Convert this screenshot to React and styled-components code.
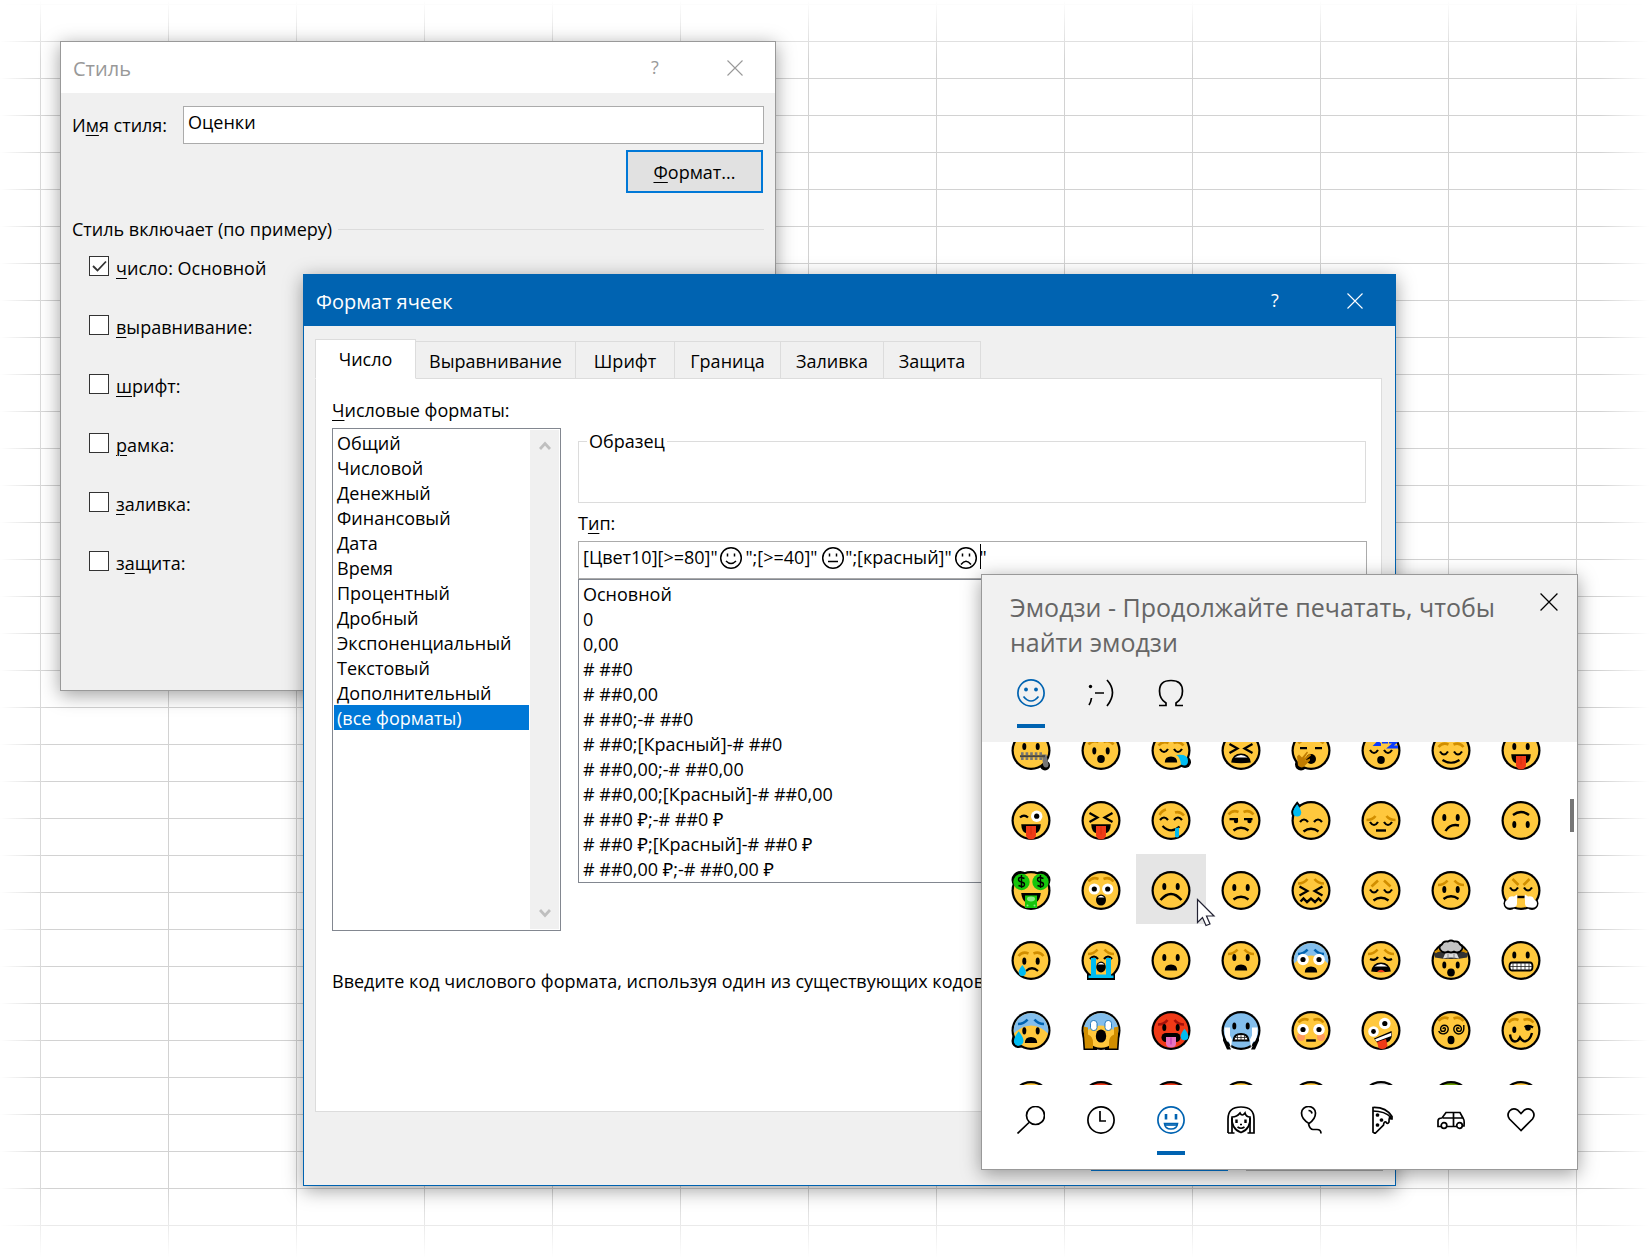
import React, { useState } from 'react';
import styled, { createGlobalStyle, css } from 'styled-components';

const GlobalStyle = createGlobalStyle`
  * {
    box-sizing: border-box;
  }
  body {
    margin: 0;
    background: #fff;
    color: #000;
    font-family: 'Open Sans', 'Noto Sans', 'DejaVu Sans', sans-serif;
    font-size: 18px;
    line-height: 25px;
  }
  button,
  input {
    font: inherit;
    color: inherit;
  }
  u {
    text-underline-offset: 3px;
    text-decoration-thickness: 1px;
  }
`;

const YELLOW = '#ffc83d';
const ORANGE = '#d18e00';
const RED = '#f03a17';
const BLUE = '#00bcf2';
const ICE = '#83beec';
const NAVY = '#0063b1';

/* ---------- desktop and windows ---------- */

const Desktop = styled.main`
  position: relative;
  min-height: 100vh;
  overflow: hidden;
`;

const Cells = styled.div`
  position: absolute;
  inset: 0;
  background-image: linear-gradient(#d2d2d2 1px, transparent 1px),
    linear-gradient(90deg, #d2d2d2 1px, transparent 1px);
  background-size: 128px 37px;
  background-position: 40px 4px;
  mask-image: linear-gradient(transparent, #000 60px, #000 calc(100% - 70px), transparent),
    linear-gradient(90deg, transparent, #000 48px, #000 calc(100% - 50px), transparent);
  mask-composite: intersect;
`;

const Window = styled.section`
  position: absolute;
  left: ${({ $left }) => $left}px;
  top: ${({ $top }) => $top}px;
  width: ${({ $width }) => $width}px;
  border: 1px solid ${({ $border }) => $border || '#999'};
  background: #f0f0f0;
  box-shadow: 0 4px 18px rgba(0, 0, 0, 0.38);
`;

const TitleBar = styled.header`
  display: flex;
  align-items: center;
  height: 51px;
  padding-left: 12px;
  background: ${({ $active }) => ($active ? NAVY : '#fff')};
  color: ${({ $active }) => ($active ? '#fff' : '#999')};
`;

const Title = styled.h1`
  flex: 1;
  margin: 0;
  padding-top: 2px;
  font-size: 20px;
  font-weight: 400;
`;

const TitleButton = styled.button`
  display: grid;
  place-items: center;
  width: 80px;
  height: 51px;
  padding: 0;
  border: 0;
  background: none;
`;

const PushButton = styled.button`
  width: 137px;
  height: 43px;
  padding: 2px 0 0;
  border: ${({ $primary }) => ($primary ? '2px solid #0078d7' : '1px solid #adadad')};
  background: #e1e1e1;
`;

const TextInput = styled.input`
  flex: 1;
  width: 100%;
  min-width: 0;
  height: 38px;
  padding: 0 4px 6px;
  border: 1px solid #ababab;
  border-radius: 0;
  background: #fff;
  outline: none;
`;

/* ---------- style window ---------- */

const StyleBody = styled.div`
  display: flex;
  flex-direction: column;
  padding: 13px 11px 114px;
`;

const NameRow = styled.div`
  display: flex;
  align-items: center;
  gap: 16px;
`;

const ButtonRow = styled.div`
  display: flex;
  justify-content: flex-end;
  gap: 18px;
  padding: ${({ $pad }) => $pad};
`;

const GroupTitle = styled.div`
  display: flex;
  align-items: center;
  gap: 6px;
  margin-bottom: 14px;
  &::after {
    content: '';
    flex: 1;
    height: 1px;
    background: #dcdcdc;
  }
`;

const CheckList = styled.div`
  display: grid;
  gap: 34px;
  padding-left: 17px;
`;

const CheckLabel = styled.label`
  display: flex;
  align-items: flex-start;
  gap: 7px;
`;

const CheckBox = styled.span`
  display: grid;
  width: 20px;
  height: 20px;
  > * {
    grid-area: 1 / 1;
  }
  input {
    appearance: none;
    width: 20px;
    height: 20px;
    margin: 0;
    border: 1px solid #333;
    background: #fff;
  }
  svg {
    pointer-events: none;
  }
  input:not(:checked) + svg {
    visibility: hidden;
  }
`;

/* ---------- format window ---------- */

const FormatBody = styled.div`
  padding: 13px 12px 14px 11px;
`;

const TabRow = styled.div`
  display: flex;
  align-items: flex-end;
  height: 39px;
`;

const Tab = styled.button`
  width: ${({ $width }) => $width}px;
  height: 38px;
  margin-bottom: -1px;
  padding: 2px 0 0;
  border: 1px solid #dcdcdc;
  border-left-width: 0;
  background: #f0f0f0;
  ${({ $active }) =>
    $active &&
    css`
      height: 40px;
      padding: 0;
      border-left-width: 1px;
      border-bottom-color: #fff;
      background: #fff;
    `}
`;

const Panel = styled.div`
  margin-right: 1px;
  padding: 19px 14px 117px 16px;
  border: 1px solid #dcdcdc;
  background: #fff;
`;

const Columns = styled.div`
  display: grid;
  grid-template-columns: 229px 1fr;
  gap: 17px;
`;

const FieldLabel = styled.label`
  display: block;
  padding-bottom: 5px;
`;

const ListFrame = styled.div`
  display: flex;
  height: ${({ $height }) => $height}px;
  border: 1px solid #828790;
  background: #fff;
`;

const ListBox = styled.ul`
  flex: 1;
  margin: 0;
  padding: 1px;
  list-style: none;
`;

const ListItem = styled.li`
  height: 25px;
  padding: 1px 0 0 3px;
  white-space: pre;
  background: ${({ $selected }) => ($selected ? '#0078d7' : 'transparent')};
  color: ${({ $selected }) => ($selected ? '#fff' : '#000')};
`;

const ScrollTrack = styled.div`
  display: flex;
  flex-direction: column;
  justify-content: space-between;
  align-items: center;
  width: 29px;
  margin: 1px 1px 1px 0;
  padding: 11px 0;
  background: #f0f0f0;
`;

const Sample = styled.fieldset`
  height: 74px;
  margin: 31px 1px 8px 0;
  padding: 0 8px;
  border: 1px solid #dcdcdc;
  legend {
    padding: 0 2px;
  }
`;

const TypeBox = styled.div`
  position: relative;
  display: flex;
`;

const Caret = styled.i`
  position: absolute;
  left: 402px;
  top: 3px;
  width: 1px;
  height: 25px;
  background: #000;
`;

// outline faces shown at full size over the small text glyphs of the code
const CodeFace = styled.svg`
  position: absolute;
  left: ${({ $left }) => $left}px;
  top: 5px;
  border-radius: 50%;
  background: #fff;
  pointer-events: none;
`;

const Hint = styled.p`
  margin: 38px 0 0;
`;

/* ---------- emoji panel ---------- */

const EmojiHead = styled.header`
  padding: 15px 14px 14px;
  background: #f1f1f1;
`;

const EmojiTitleRow = styled.div`
  display: flex;
  align-items: flex-start;
  justify-content: space-between;
  padding-left: 14px;
  color: #666;
`;

const EmojiTitle = styled.h2`
  flex: 1;
  margin: 0;
  font-size: 25px;
  line-height: 35px;
  font-weight: 400;
`;

const CloseEmoji = styled.button`
  width: 28px;
  height: 28px;
  padding: 0;
  border: 0;
  background: none;
  color: #000;
`;

const IconRow = styled.nav`
  display: grid;
  grid-template-columns: repeat(8, 70px);
  padding-top: 19px;
`;

const CategoryBar = styled(IconRow)`
  padding: 21px 14px 14px;
  background: #fff;
`;

const IconTab = styled.button`
  display: grid;
  justify-items: center;
  gap: 17px;
  padding: 0;
  border: 0;
  background: none;
  color: ${({ $active }) => ($active ? NAVY : '#000')};
  &::after {
    content: '';
    width: 28px;
    height: 4px;
    background: ${({ $active }) => ($active ? NAVY : 'transparent')};
  }
`;

const EmojiScroll = styled.div`
  display: flex;
  align-items: flex-start;
  justify-content: space-between;
  height: 343px;
  padding: 0 3px 0 14px;
  background: #fff;
  overflow: hidden;
`;

const EmojiGrid = styled.div`
  display: grid;
  grid-template-columns: repeat(8, 70px);
  margin-top: -28px;
`;

const EmojiCell = styled.button`
  height: 70px;
  padding: 0;
  border: 0;
  background: ${({ $hover }) => ($hover ? '#e5e5e5' : 'transparent')};
  svg {
    display: block;
  }
`;

const Thumb = styled.div`
  width: 4px;
  height: 33px;
  margin-top: 57px;
  background: #767676;
`;

const Pointer = styled.svg`
  position: absolute;
  left: 1196px;
  top: 898px;
`;

/* ---------- face parts, centred on 0,0 ---------- */

const Ink = ({ d, w = 2.2, c = '#000' }) => (
  <path d={d} stroke={c} strokeWidth={w} fill="none" />
);

const Disc = ({ fill = YELLOW }) => (
  <>
    <circle r="19.5" fill="#000" />
    <circle r="17.3" fill={fill} />
  </>
);

const Eyes = ({ y = -4 }) => (
  <>
    <ellipse cx="-6.7" cy={y} rx="2" ry="3.6" />
    <ellipse cx="6.7" cy={y} rx="2" ry="3.6" />
  </>
);

const WideEyes = ({ y = -1, x = 7.5, r = 5.8 }) => (
  <>
    <circle cx={-x} cy={y} r={r} fill="#fff" />
    <circle cx={x} cy={y} r={r} fill="#fff" />
    <circle cx={-x} cy={y} r="2.6" />
    <circle cx={x} cy={y} r="2.6" />
  </>
);

// lids curve down when shut, up when smiling
const Lids = ({ y = 0, up }) => (
  <Ink
    d={
      up
        ? `M-11 ${y + 1.5}q4-5 8 0M3 ${y + 1.5}q4-5 8 0`
        : `M-11 ${y - 1.5}q4 6 8 0M3 ${y - 1.5}q4 6 8 0`
    }
  />
);

const Squint = ({ y = -3 }) => (
  <Ink d={`M-11.5 ${y - 4.5}L-3.5 ${y}L-11.5 ${y + 4.5}M11.5 ${y - 4.5}L3.5 ${y}L11.5 ${y + 4.5}`} />
);

const Brows = ({ y = -7, c = ORANGE }) => (
  <Ink w={2.6} c={c} d={`M-12.5 ${y + 1}q4-5 10-2.5M12.5 ${y + 1}q-4-5-10-2.5`} />
);

const WorryBrows = ({ y = -7, c = ORANGE }) => (
  <Ink w={2.6} c={c} d={`M-13 ${y + 2.5}q6 0 9.5-4.5M13 ${y + 2.5}q-6 0-9.5-4.5`} />
);

const Frown = ({ y = 8 }) => <Ink w={2.4} d={`M-7.5 ${y + 2}q7.5-5.5 15 0`} />;
const Gape = ({ y = 10 }) => <path d={`M-6.2 ${y}q0-6 6.2-6t6.2 6z`} />;
const Round = ({ y = 8.5, rx = 3.8, ry = 4 }) => <ellipse cy={y} rx={rx} ry={ry} />;
const Flat = ({ y = 10, w = 5 }) => <Ink w={2.4} d={`M${-w} ${y}H${w}`} />;

const Tongue = () => (
  <>
    <path d="M-9.8 3.8H9.8Q9.5 12 4 13H-4Q-9.5 12-9.8 3.8z" />
    <path d="M-5 5.5H5V15Q4 19 0 19T-5 15z" fill={RED} />
    <path d="M0 6V14" stroke="#ca2b0c" strokeWidth="0.8" />
  </>
);

const Drop = ({ x, y, s = 1, outline }) => (
  <path
    transform={`translate(${x} ${y}) scale(${s})`}
    d="M0-6Q4-1 4 2A4 4 0 0 1-4 2Q-4-1 0-6z"
    fill={BLUE}
    stroke={outline ? '#000' : 'none'}
    strokeWidth={outline ? 4 : 0}
    paintOrder="stroke"
  />
);

const ColdTop = () => <path d="M-17 3A17.3 17.3 0 1 1 17 3Q9-5 0-5T-17 3z" fill={ICE} />;

const Howl = ({ y = 5, h = 9 }) => (
  <>
    <path d={`M-9.8 ${y + h}Q-8.5 ${y} 0 ${y}T9.8 ${y + h}Q0 ${y + h + 1.5}-9.8 ${y + h}z`} />
    <path d={`M-6.5 ${y + 4}Q0 ${y - 1} 6.5 ${y + 4}z`} fill="#fff" />
  </>
);

const Teeth = ({ d, lines }) => (
  <>
    <path d={d} fill="#fff" stroke="#000" strokeWidth="1.8" />
    <path d={lines} fill="none" stroke="#222" strokeWidth="0.8" />
  </>
);

const FACES = [
  // row 1
  <><circle cx="14" cy="15" r="5" /><Disc /><Eyes /><path d="M11 4h4.5l2 10q0 3-2.5 3t-3-3z" fill="#767676" /><path d="M-10 3.2H12M-10 8.2H12" stroke="#767676" strokeWidth="2.8" strokeDasharray="2.6 2" /><Ink w={2} c="#444" d="M-11 5.7H14" /></>,
  <><Disc /><Brows /><Eyes y={0.3} /><Round /></>,
  <><circle cx="14" cy="11.5" r="6" /><Disc /><Brows y={-6} /><Lids /><Gape y={12} /><path d="M5 4.5Q17 3 17 10T10 14Q9 6 5 4.5z" fill={BLUE} /></>,
  <><Disc /><Squint y={-2} /><Howl y={3} /></>,
  <><circle cx="-10" cy="14" r="6" /><Disc /><Brows y={-8} /><Ink d="M-11-2.3h7M4-2.3h7" /><Round rx={5} ry={5} /><path d="M-14 6l2-2 3 3 5-6 1 1-4 6 6-5 1 2-6 5 5-2 0 2-5 5Q-9 19-13 15z" fill="#c17c00" /></>,
  <><Disc /><Lids y={1} /><Round y={9.5} /><Ink w={2.8} c="#0a3cff" d="M-5-11H0L-5-6H0M1-8.5H7M8-8.5H15L9-3.5H17" /></>,
  <><Disc /><Brows y={-4.5} /><Lids y={2.5} /><Ink d="M-8.5 9.5Q0 15 8.5 9.5" /></>,
  <><Disc /><Eyes /><Tongue /></>,
  // row 2
  <><Disc /><Ink d="M-11-3q4-4 8 0" /><circle cx="5.7" cy="-4.3" r="5.7" fill="#fff" /><circle cx="5.7" cy="-4.3" r="2.6" /><Tongue /></>,
  <><Disc /><Squint /><Tongue /></>,
  <><Disc /><Ink w={2.6} c={ORANGE} d="M-11.5-5.5Q-9-10-5-11M4-8Q9-9.5 13-5" /><Lids y={-2} up /><Ink d="M-8.5 5.5Q0 14 8.5 6" /><path d="M4 8l4-1v9q-2 2-4 0z" fill={BLUE} /></>,
  <><Disc /><Brows y={-7} /><Ink d="M-11.5-1.3h8.5M3-1.3h8.5" /><circle cx="-5" cy="0.5" r="2.2" /><circle cx="8.5" cy="0.5" r="2.2" /><Frown /></>,
  <><Drop x={-13.8} y={-10} outline /><Disc /><Drop x={-13.8} y={-10} /><Lids y={0} up /><Frown y={9} /></>,
  <><Disc /><Ink w={2.6} c={ORANGE} d="M-14.5-0.5q6 0 9-4M14.5-0.5q-6 0-9-4" /><Lids y={3} /><Flat /></>,
  <><Disc /><Eyes y={-3} /><Ink w={2.4} d="M-5.5 10.5Q-1 3 8 5" /></>,
  <><Disc /><Ink w={2.4} d="M-8-5.5Q0-11.5 8-5.5" /><Eyes y={4} /></>,
  // row 3
  <><circle cx="-10.5" cy="-10.5" r="9" /><circle cx="10.5" cy="-10.5" r="9" /><Disc /><circle cx="-9.5" cy="-8.5" r="8.2" fill="#16c60c" /><circle cx="9.5" cy="-8.5" r="8.2" fill="#16c60c" /><Ink w={1.4} d="M-6.5-12q-6-2.5-6 1 0 2 3 2.5t3 2.5q0 3.5-6 1M-9.5-15.5v13M12.5-12q-6-2.5-6 1 0 2 3 2.5t3 2.5q0 3.5-6 1M9.5-15.5v13" /><path d="M-9.8 2.5H9.8Q9 10 5 12H-5Q-9 10-9.8 2.5z" /><path d="M-6 5H6V17.5H-6z" fill="#16c60c" /><ellipse cy="8.5" rx="4" ry="2.4" fill="#8be686" /><circle cx="-3.5" cy="15" r="1" fill="#8be686" /><circle cx="3.5" cy="15" r="1" fill="#8be686" /></>,
  <><Disc /><Brows y={-10} /><WideEyes x={6.7} y={-1.5} r={5.6} /><Round y={9.5} rx={5} ry={5.6} /><path d="M-3.5 7Q0 3.5 3.5 7z" fill="#fff" /></>,
  <><Disc /><Eyes /><Ink w={2.6} d="M-10.5 9.5Q0-2.5 10.5 9.5" /></>,
  <><Disc /><Eyes y={-3} /><Frown y={7} /></>,
  <><Disc /><WorryBrows y={-9.5} /><Squint y={0.5} /><Ink w={2.4} d="M-10.5 11l3-3 3.5 3.5 4-3.5 4 3.5 3.5-3.5 3 3" /></>,
  <><Disc /><Ink w={2.6} c={ORANGE} d="M-9.5-4l6.5-6M9.5-4l-6.5-6" /><Lids y={0.5} /><Frown /></>,
  <><Disc /><WorryBrows y={-8} /><Eyes y={-1} /><Frown y={6.5} /></>,
  <><circle cx="-11" cy="13" r="6.5" /><circle cx="11" cy="13" r="6.5" /><Disc /><Ink w={2.6} c={ORANGE} d="M-8.5-11.5l6 6M8.5-11.5l-6 6" /><Lids y={-1.5} /><Flat y={6.5} w={4} /><path d="M-4 4q1 3 0 5v4q0 4-5 4-7 1-7-4 0-3 3-4 1-4 6-3z" fill="#fff" /><path d="M4 4q-1 3 0 5v4q0 4 5 4 7 1 7-4 0-3-3-4-1-4-6-3z" fill="#fff" /></>,
  // row 4
  <><Disc /><Brows y={-5.5} /><Eyes y={0.7} /><Ink d="M-5 10.5Q1 5 7 10.5" /><Drop x={-8.7} y={10} s={0.9} /></>,
  <><path d="M-14 12H14V19.5H-14z" /><Disc /><WorryBrows y={-9} /><Lids y={-3} up /><path d="M-10-2.5h5V14h10V-2.5h5V15h2.5v2.5h-25V15h2.5z" fill={BLUE} /><Round y={6.5} rx={4.8} ry={5.4} /><path d="M-3.5 4Q0 0.5 3.5 4z" fill="#fff" /></>,
  <><Disc /><Eyes y={-3} /><Gape /></>,
  <><Disc /><WorryBrows y={-9} /><Eyes y={-3} /><Gape /></>,
  <><Disc /><ColdTop /><WorryBrows y={-9} c={NAVY} /><WideEyes x={8} /><Gape y={12} /></>,
  <><Disc /><WorryBrows y={-9} /><Ink d="M-11-1.5q5 2.5 8-2M11-1.5q-5 2.5-8-2" /><Howl y={2} /><path d="M-4 11.5Q0 7 4 11.5z" fill={RED} /></>,
  <><Disc /><path d="M-17-8Q0-14 17-8L16-3Q0 0-16-3z" fill="#333" /><path d="M-16-8q3-3 8-2M16-8q-3-3-8-2" stroke={ORANGE} strokeWidth="2.4" fill="none" /><path d="M-5-9H5L8-2Q0-4-8-2z" fill="#ddd" /><path d="M-3-9v7M3-9v7" stroke="#888" strokeWidth="1" /><path d="M-9-9q-5-4 0-7 1-4 6-3 3-2 6 0 5-1 6 3 5 3 0 7-3 2-6 0-3 2-6 0-3 2-6 0z" fill="#c4c4c4" stroke="#000" strokeWidth="1.8" /><Eyes y={4.5} /><Round y={12} /></>,
  <><Disc /><Eyes y={-5.5} /><Teeth d="M-9 2H9Q11.5 2 11.5 6T9 10H-9Q-11.5 10-11.5 6T-9 2z" lines="M-11 6H11M-8 2V10M-4 2V10M0 2V10M4 2V10M8 2V10" /></>,
  // row 5
  <><Drop x={-12.3} y={8} s={1.2} outline /><Disc /><ColdTop /><WorryBrows y={-9} c={NAVY} /><Eyes y={0.3} /><Gape y={12.5} /><Drop x={-12.3} y={8} s={1.2} /></>,
  <><path d="M-19-2L-17.5 19.5H-4V16H4V19.5H17.5L19-2z" /><Disc /><ColdTop /><path d="M-17.5-4l4.5 1v7q5 2 5 8v6h-8zM17.5-4l-4.5 1v7q-5 2-5 8v6h8z" fill={ORANGE} /><rect x="-10.5" y="-10" width="6.5" height="10" rx="3" fill="#fff" stroke={NAVY} strokeWidth="0.8" /><rect x="4" y="-10" width="6.5" height="10" rx="3" fill="#fff" stroke={NAVY} strokeWidth="0.8" /><Round y={5.5} rx={5.2} ry={6.6} /></>,
  <><Disc fill={RED} /><WorryBrows y={-8.5} c="#a4100a" /><Eyes y={-3} /><rect x="-9.5" y="2.5" width="19" height="9" rx="4.5" /><path d="M-5 6.5H5V13Q5 17 0 17T-5 13z" fill="#e773c0" /><path d="M0 7v7" stroke="#c239b3" strokeWidth="1.2" /><Drop x={13.5} y={4} s={0.95} /></>,
  <><path d="M-18 2v8l4 9h4M18 2v8l-4 9h-4" /><Disc fill={ICE} /><Eyes y={-4.5} /><Teeth d="M-7.5 10Q-7 3.5 0 3.5T7.5 10z" lines="M-7 7H7M-3.5 4V10M0 4V10M3.5 4V10" /><path d="M-16.5-3h5.5v8l2 4-1 9-2-7-2 0q-3-6-2.5-14zM16.5-3h-5.5v8l-2 4 1 9 2-7 2 0q3-6 2.5-14z" fill="#fff" /></>,
  <><Disc /><Brows y={-9} /><circle cx="-10" cy="6.5" r="4" fill="#ff9a5c" /><circle cx="10" cy="6.5" r="4" fill="#ff9a5c" /><WideEyes x={8} /><Flat w={4.8} /></>,
  <><Disc /><circle cx="-7.5" cy="1" r="5.3" fill="#fff" /><circle cx="-7.5" cy="1" r="2.4" /><circle cx="3.8" cy="-7" r="5.8" fill="#fff" /><circle cx="3.8" cy="-7" r="2.6" /><path d="M-7 8L10.5 0.5Q12.5 9 6 12T-4 12z" /><path d="M-6 8.7L10.3 2.2V5.5L-4.5 11z" fill="#fff" /><path d="M-4 11.5L5 8.5 6.5 15Q5 18.5 1 18.5T-3 15z" fill={RED} /></>,
  <><Disc /><Brows y={-10.5} /><Ink w={1.4} d="M-8-1.5a1.2 1.2 0 0 1 2.4 0a2.4 2.4 0 0 1-4.8 0a3.8 3.8 0 0 1 7.6 0a5 5 0 0 1-9.5 2M8-1.5a1.2 1.2 0 0 0-2.4 0a2.4 2.4 0 0 0 4.8 0a3.8 3.8 0 0 0-7.6 0a5 5 0 0 0 10 0v-4" /><Round y={9.5} rx={3.5} ry={4.3} /></>,
  <><Disc /><Brows y={-9} /><ellipse cx="-6.7" cy="-0.7" rx="2" ry="3.2" /><Ink d="M3.5-3.5Q8-6 12-3" /><circle cx="7" cy="-2.5" r="2.8" /><Ink w={2.4} d="M-11 4q1 7 5 7 3 0 5-4 3 5 6 3.5 4-1 6-8" /></>,
  // row 6, only the tops are scrolled into view
  <Disc />,
  <Disc fill={RED} />,
  <Disc fill={RED} />,
  <Disc />,
  <Disc />,
  <Disc fill="#e6e6e6" />,
  <Disc fill="#6b9e00" />,
  <Disc />,
];

const HOVERED = 18;

/* ---------- icons ---------- */

const Cross = ({ size }) => (
  <svg width={size} height={size} viewBox="0 0 16 16" stroke="currentColor" strokeWidth="1.1">
    <path d="M0.5 0.5L15.5 15.5M15.5 0.5L0.5 15.5" />
  </svg>
);

const Chevron = ({ down }) => (
  <svg width="12" height="10" viewBox="0 0 12 10" fill="none" stroke="#bfbfbf" strokeWidth="2.8">
    <path d={down ? 'M1 2L6 7.5L11 2' : 'M1 8L6 2.5L11 8'} />
  </svg>
);

const Glyph = ({ children }) => (
  <svg width="28" height="28" viewBox="-14 -14 28 28" fill="none" stroke="currentColor" strokeWidth="1.7">
    {children}
  </svg>
);

const CODE_FACES = [
  { left: 141, mouth: 'M-5 3Q0 8 5 3' },
  { left: 243, mouth: 'M-5 3.5H5' },
  { left: 376, mouth: 'M-5 6.5Q0 0 5 6.5' },
];

const MODES = [
  { name: 'Эмодзи', icon: <><circle r="13.1" /><circle cx="-5" cy="-3.5" r="1.9" fill="currentColor" stroke="none" /><circle cx="5" cy="-3.5" r="1.9" fill="currentColor" stroke="none" /><path d="M-7.5 3.5Q-4 8 0 8T7.5 3.5" /></> },
  { name: 'Каомодзи', icon: <><circle cx="-10.5" cy="-6.5" r="1.7" fill="currentColor" stroke="none" /><path d="M-9.5 5Q-10 9-12 12M-6 0H3M6-13Q11.5-7 11.5-0.5T6 13" /></> },
  { name: 'Символы', icon: <path d="M-12 12.5H-5V10Q-11.5 6-11.5-2 -11.5-12.5 0-12.5T11.5-2Q11.5 6 5 10V12.5H12" /> },
];

const CATEGORIES = [
  { name: 'Поиск', icon: <><circle cx="4.5" cy="-4.5" r="9" /><path d="M-2 2.5L-13.5 13.5" /></> },
  { name: 'Недавние', icon: <><circle r="13.1" /><path d="M-1-9V1H5" /></> },
  { name: 'Смайлики', icon: <><circle r="13.1" /><path d="M-5-6V-0.5M5-6V-0.5" strokeWidth="2.6" /><path d="M-6.5 3.5H6.5Q6 9 0 9T-6.5 3.5z" /><path d="M-6 5H6" /></> },
  { name: 'Люди', icon: <><path d="M-13 13V-1Q-13-13 0-13T13-1V13H6.5M-13 13H-6.5" /><path d="M-9-3Q-10 9 0 12.5 10 9 9-3 5-3 4-7 1-3-1-7-4-3-9-3z" /><path d="M-9-2V13M9-2V13" /><path d="M-4.5-0.5V3M4.5-0.5V3" strokeWidth="2.4" /><path d="M-3.5 7Q0 9.5 3.5 7M-1 4.5H1" /></> },
  { name: 'Праздники', icon: <><path d="M-2 3.5Q-9.5-1-9.5-7A7 6.5 0 0 1 4.5-7Q4.5-1-2 3.5z" /><path d="M-2.5-9.5Q0.5-9.5 1-6.5M-2.5 4Q-1 9.5 2 9.5H6Q10 9.5 10 13.5" /></> },
  { name: 'Еда', icon: <><path d="M-8-12.5Q5-13 11-3.5V-1Q9-1 9-3 8-3 8 2 6 5 5 2 3 1 2.5 5L-6 13.5 -8 12z" /><path d="M-8-9Q4-9 10-2.5" /><circle cx="-3.5" cy="-5" r="1" fill="currentColor" /><circle cx="0.5" cy="0" r="1" fill="currentColor" /><circle cx="-3.5" cy="5" r="1" fill="currentColor" /></> },
  { name: 'Транспорт', icon: <><circle cx="-7" cy="5.5" r="2.8" /><circle cx="8.5" cy="5.5" r="2.8" /><path d="M-10 6.5H-13V1Q-13-2-9-2L-5-7.5H9L12.5-1Q13.5 0 13 6H11.5M-4 6.5H5.5M-8-2H12M2.5-8V6" /></> },
  { name: 'Символы', icon: <path d="M0 10.5L-11.5-1Q-14.5-5-11.5-9 -8-12.5-3.5-10L0-6.5 3.5-10Q8-12.5 11.5-9 14.5-5 11.5-1z" /> },
];

/* ---------- data ---------- */

const STYLE_PARTS = [
  { id: 'number', label: <><u>ч</u>исло: Основной</>, on: true },
  { id: 'align', label: <><u>в</u>ыравнивание:</> },
  { id: 'font', label: <><u>ш</u>рифт:</> },
  { id: 'border', label: <><u>р</u>амка:</> },
  { id: 'fill', label: <><u>з</u>аливка:</> },
  { id: 'protect', label: <>з<u>а</u>щита:</> },
];

const TABS = [
  ['Число', 101],
  ['Выравнивание', 160],
  ['Шрифт', 99],
  ['Граница', 106],
  ['Заливка', 103],
  ['Защита', 97],
];

const GROUPS = [
  'Общий',
  'Числовой',
  'Денежный',
  'Финансовый',
  'Дата',
  'Время',
  'Процентный',
  'Дробный',
  'Экспоненциальный',
  'Текстовый',
  'Дополнительный',
  '(все форматы)',
];

const CODES = [
  'Основной',
  '0',
  '0,00',
  '# ##0',
  '# ##0,00',
  '# ##0;-# ##0',
  '# ##0;[Красный]-# ##0',
  '# ##0,00;-# ##0,00',
  '# ##0,00;[Красный]-# ##0,00',
  '# ##0 ₽;-# ##0 ₽',
  '# ##0 ₽;[Красный]-# ##0 ₽',
  '# ##0,00 ₽;-# ##0,00 ₽',
];

const TYPE_CODE =
  '[Цвет10][>=80]"\u2005☺\u2005";[>=40]"\u2005😐\u2005";[красный]"\u2005☹\u2005"';

const WindowTitle = ({ title, active }) => (
  <TitleBar $active={active}>
    <Title>{title}</Title>
    <TitleButton>?</TitleButton>
    <TitleButton aria-label="Закрыть">
      <Cross size={16} />
    </TitleButton>
  </TitleBar>
);

const StyleWindow = () => (
  <Window $left={60} $top={41} $width={716}>
    <WindowTitle title="Стиль" />
    <StyleBody>
      <NameRow>
        <label htmlFor="style-name">
          И<u>м</u>я стиля:
        </label>
        <TextInput id="style-name" defaultValue="Оценки" />
      </NameRow>
      <ButtonRow $pad="6px 1px 24px 0">
        <PushButton $primary>
          <u>Ф</u>ормат...
        </PushButton>
      </ButtonRow>
      <GroupTitle>Стиль включает (по примеру)</GroupTitle>
      <CheckList>
        {STYLE_PARTS.map(({ id, label, on }) => (
          <CheckLabel key={id}>
            <CheckBox>
              <input type="checkbox" defaultChecked={on} />
              <svg width="20" height="20" viewBox="0 0 20 20" fill="none" stroke="#333" strokeWidth="1.8">
                <path d="M4 10L8.5 14.5L17 5.5" />
              </svg>
            </CheckBox>
            <span>{label}</span>
          </CheckLabel>
        ))}
      </CheckList>
    </StyleBody>
  </Window>
);

const FormatWindow = () => {
  const [group, setGroup] = useState('(все форматы)');

  return (
    <Window $left={303} $top={274} $width={1093} $border={NAVY}>
      <WindowTitle title="Формат ячеек" active />
      <FormatBody>
        <TabRow>
          {TABS.map(([name, width], i) => (
            <Tab key={name} $width={width} $active={i === 0}>
              {name}
            </Tab>
          ))}
        </TabRow>
        <Panel>
          <Columns>
            <div>
              <FieldLabel as="div">
                <u>Ч</u>исловые форматы:
              </FieldLabel>
              <ListFrame $height={503}>
                <ListBox role="listbox">
                  {GROUPS.map((name) => (
                    <ListItem
                      key={name}
                      role="option"
                      aria-selected={name === group}
                      $selected={name === group}
                      onClick={() => setGroup(name)}
                    >
                      {name}
                    </ListItem>
                  ))}
                </ListBox>
                <ScrollTrack>
                  <Chevron />
                  <Chevron down />
                </ScrollTrack>
              </ListFrame>
            </div>
            <div>
              <Sample>
                <legend>Образец</legend>
              </Sample>
              <FieldLabel htmlFor="type">
                Т<u>и</u>п:
              </FieldLabel>
              <TypeBox>
                <TextInput id="type" defaultValue={TYPE_CODE} />
                {CODE_FACES.map(({ left, mouth }) => (
                  <CodeFace
                    key={left}
                    $left={left}
                    width="24"
                    height="24"
                    viewBox="-12 -12 24 24"
                    fill="none"
                    stroke="#000"
                    strokeWidth="1.5"
                  >
                    <circle r="10.3" />
                    <path d="M-3.5-4.5V-1.5M3.5-4.5V-1.5" />
                    <path d={mouth} />
                  </CodeFace>
                ))}
                <Caret />
              </TypeBox>
              <ListFrame $height={304}>
                <ListBox role="listbox">
                  {CODES.map((code) => (
                    <ListItem key={code} role="option">
                      {code}
                    </ListItem>
                  ))}
                </ListBox>
              </ListFrame>
            </div>
          </Columns>
          <Hint>Введите код числового формата, используя один из существующих кодов</Hint>
        </Panel>
        <ButtonRow $pad="16px 0 0">
          <PushButton $primary aria-label="ОК" />
          <PushButton aria-label="Отмена" />
        </ButtonRow>
      </FormatBody>
    </Window>
  );
};

const EmojiPanel = () => {
  const [category, setCategory] = useState(2);

  return (
    <Window $left={981} $top={574} $width={597}>
      <EmojiHead>
        <EmojiTitleRow>
          <EmojiTitle>Эмодзи - Продолжайте печатать, чтобы найти эмодзи</EmojiTitle>
          <CloseEmoji aria-label="Закрыть">
            <Cross size={18} />
          </CloseEmoji>
        </EmojiTitleRow>
        <IconRow>
          {MODES.map(({ name, icon }, i) => (
            <IconTab key={name} aria-label={name} $active={i === 0}>
              <Glyph>{icon}</Glyph>
            </IconTab>
          ))}
        </IconRow>
      </EmojiHead>
      <EmojiScroll>
        <EmojiGrid>
          {FACES.map((face, i) => (
            <EmojiCell key={i} $hover={i === HOVERED}>
              <svg width="70" height="70" viewBox="-35 -36.5 70 70">
                {face}
              </svg>
            </EmojiCell>
          ))}
        </EmojiGrid>
        <Thumb />
      </EmojiScroll>
      <CategoryBar>
        {CATEGORIES.map(({ name, icon }, i) => (
          <IconTab key={i} aria-label={name} $active={i === category} onClick={() => setCategory(i)}>
            <Glyph>{icon}</Glyph>
          </IconTab>
        ))}
      </CategoryBar>
    </Window>
  );
};

const App = () => (
  <>
    <GlobalStyle />
    <Desktop>
      <Cells />
      <StyleWindow />
      <FormatWindow />
      <EmojiPanel />
      <Pointer width="20" height="30" viewBox="0 0 20 30">
        <path d="M1.5 1.5V24.5L6.5 19.5L10 27.5L14 26L10.5 18H18z" fill="#fff" stroke="#223" strokeWidth="1.2" />
      </Pointer>
    </Desktop>
  </>
);

export default App;
